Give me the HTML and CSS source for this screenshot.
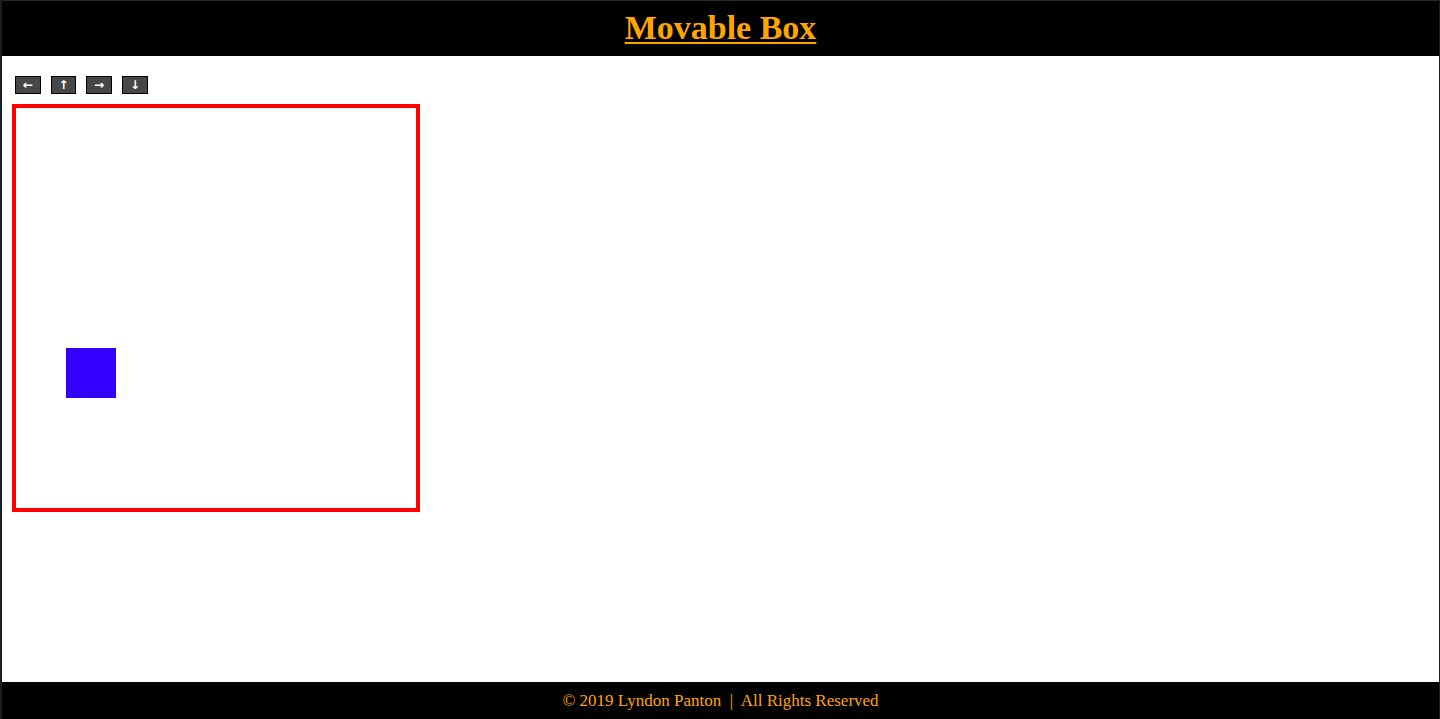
FILE: index.html
```html
<!DOCTYPE html>
<html lang="en">
<head>
<meta charset="utf-8">
<title>Movable Box</title>
<link rel="stylesheet" href="styles.css">
</head>
<body>
<div class="frame">
  <header class="site-header">
    <h1 class="title"><a href="#">Movable Box</a></h1>
  </header>
  <main class="content">
    <div class="controls">
      <button class="ctrl" type="button">&#8592;</button>
      <button class="ctrl narrow" type="button">&#8593;</button>
      <button class="ctrl" type="button">&#8594;</button>
      <button class="ctrl" type="button">&#8595;</button>
    </div>
    <div class="arena">
      <div class="mover"></div>
    </div>
  </main>
  <footer class="site-footer">© 2019 Lyndon Panton &nbsp;|&nbsp; All Rights Reserved</footer>
</div>
</body>
</html>
```
FILE: styles.css
```css
html, body {
  margin: 0;
  padding: 0;
  height: 100%;
  background: #1a1d24;
}
.frame {
  box-sizing: border-box;
  height: 719px;
  margin-left: 2px;
  margin-right: 1px;
  padding-top: 1px;
  display: flex;
  flex-direction: column;
  background: #ffffff;
  border-top: 1px solid #25282d;
  font-family: "Liberation Serif", "DejaVu Serif", serif;
}
.site-header {
  background: #000;
  height: 55px;
  display: flex;
  align-items: center;
  justify-content: center;
  margin-top: -1px;
}
.title {
  margin: 0;
  font-size: 34px;
  font-weight: bold;
  line-height: 1;
  padding-bottom: 2px;
}
.title a {
  color: #ffa500;
  text-decoration: underline;
  text-decoration-thickness: 2px;
  text-underline-offset: 3px;
}
.content {
  flex: 1;
  padding: 20px 0 0 10px;
}
.controls {
  display: flex;
  gap: 10px;
  padding-left: 3px;
  height: 18px;
}
.ctrl {
  box-sizing: border-box;
  width: 26px;
  height: 18px;
  padding: 0;
  margin: 0;
  background: #474747;
  border: 1px solid #000;
  color: #fff;
  font-family: "DejaVu Sans", sans-serif;
  font-size: 12px;
  font-weight: bold;
  line-height: 15px;
  cursor: pointer;
}
.ctrl.narrow {
  width: 25px;
}
.arena {
  position: relative;
  box-sizing: content-box;
  width: 400px;
  height: 400px;
  border: 4px solid #ff0000;
  margin-top: 10px;
}
.mover {
  position: absolute;
  left: 50px;
  top: 240px;
  width: 50px;
  height: 50px;
  background: #3300ff;
}
.site-footer {
  background: #000;
  color: #ffa500;
  height: 37px;
  display: flex;
  align-items: center;
  justify-content: center;
  font-size: 17px;
}
```
